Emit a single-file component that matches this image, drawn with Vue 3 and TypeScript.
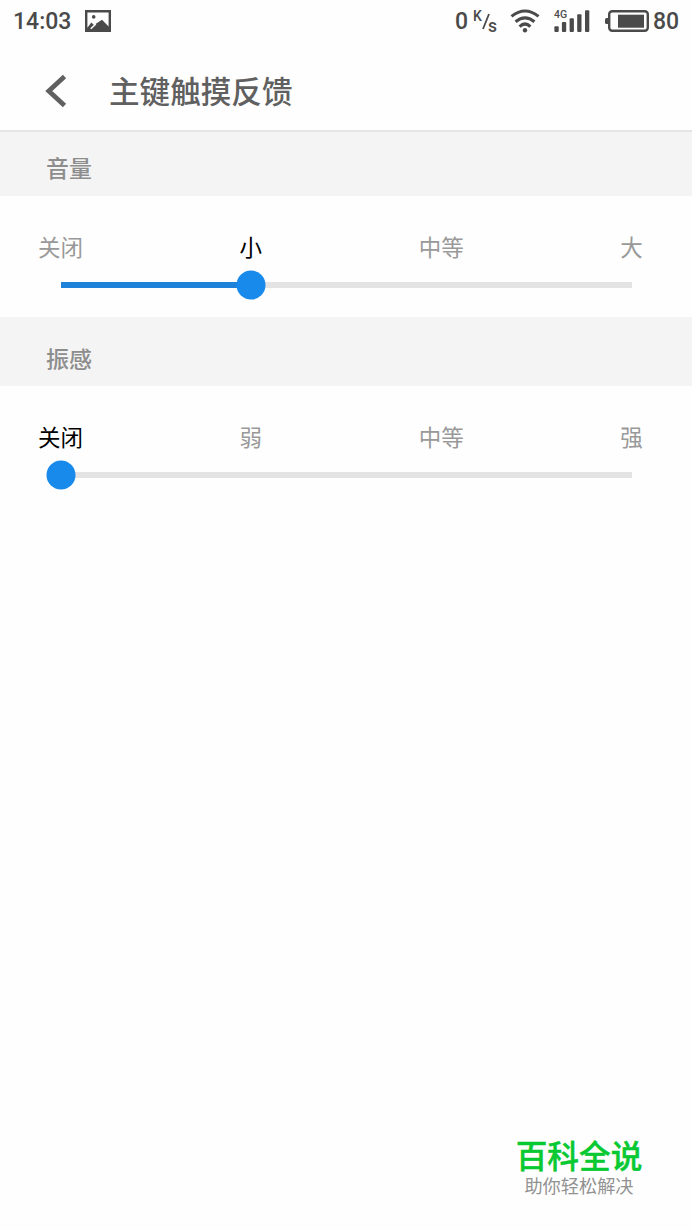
<script setup lang="ts">
import { ref } from 'vue'

interface Setting {
  title: string
  options: string[]
  value: number
}

const settings = ref<Setting[]>([
  { title: '音量', options: ['关闭', '小', '中等', '大'], value: 1 },
  { title: '振感', options: ['关闭', '弱', '中等', '强'], value: 0 },
])

const percent = (s: Setting): string => `${(s.value / (s.options.length - 1)) * 100}%`
</script>

<template>
  <main class="screen">
    <div class="status">
      <span class="time">14:03</span>
      <svg class="picture" width="26" height="22" viewBox="0 0 26 22">
        <path fill="#4a4a4a" fill-rule="evenodd" d="M0 0H26V22H0ZM2.4 2.4V17.8L6.3 12.6L9 15L17 9.8L23.6 16.5V2.4Z" />
        <circle cx="8.7" cy="6.9" r="1.8" fill="#4a4a4a" />
        <path d="M5.8 18.8L10.8 14" stroke="#fff" stroke-width="1.5" />
      </svg>
      <span class="speed">0</span>
      <span class="unit">
        <span class="unit-k">K</span>
        <svg width="8" height="18" viewBox="0 0 8 18">
          <path d="M1 17L7 2" stroke="#4a4a4a" stroke-width="1.8" />
        </svg>
        <span class="unit-s">s</span>
      </span>
      <svg class="wifi" width="30" height="24" viewBox="0 0 30 24" fill="none" stroke="#4a4a4a" stroke-width="3.1">
        <path d="M1.5 7.4Q15 -3.4 28.5 7.4" />
        <path d="M5.6 12.7Q15 4.9 24.4 12.7" />
        <path d="M9.6 17.6Q15 12.4 20.4 17.6" />
        <circle cx="15" cy="21.3" r="2.2" fill="#4a4a4a" stroke="none" />
      </svg>
      <svg class="signal" width="36" height="24" viewBox="0 0 36 24" fill="#4a4a4a">
        <text x="0" y="8.7" class="network">4G</text>
        <rect x="0.4" y="17.2" width="4.3" height="5.8" rx="1" />
        <rect x="7.9" y="13" width="4.3" height="10" rx="1" />
        <rect x="15.6" y="9.3" width="4.3" height="13.7" rx="1" />
        <rect x="23.2" y="5.2" width="4.3" height="17.8" rx="1" />
        <rect x="31" y="1.2" width="4.3" height="21.8" rx="1" />
      </svg>
      <svg class="battery" width="45" height="24" viewBox="0 0 45 24">
        <rect x="0" y="9" width="4" height="6" rx="1.5" fill="#4a4a4a" />
        <rect x="4.2" y="2.2" width="38.6" height="19.6" rx="3" fill="none" stroke="#4a4a4a" stroke-width="2.4" />
        <rect x="13" y="5.7" width="26" height="13" fill="#4a4a4a" />
      </svg>
      <span class="level">80</span>
    </div>

    <header class="header">
      <svg class="back" width="22" height="34" viewBox="0 0 22 34">
        <path d="M19.5 2.5L3.8 17L19.5 31.5" fill="none" stroke="#606060" stroke-width="4.8" />
      </svg>
      <h1>主键触摸反馈</h1>
    </header>

    <section v-for="s in settings" :key="s.title" class="setting">
      <h2>{{ s.title }}</h2>
      <div class="panel">
        <div class="labels">
          <span
            v-for="(option, i) in s.options"
            :key="option"
            class="label"
            :class="{ active: i === s.value }"
            @click="s.value = i"
          >{{ option }}</span>
        </div>
        <div class="track">
          <div class="fill" :style="{ width: percent(s) }"></div>
          <div class="thumb" :style="{ left: percent(s) }"></div>
        </div>
      </div>
    </section>

    <footer class="brand">
      <strong>百科全说</strong>
      <span>助你轻松解决</span>
    </footer>
  </main>
</template>

<style>
body {
  margin: 0;
  background: #fefefe;
}
</style>

<style scoped>
.screen {
  display: flex;
  flex-direction: column;
  box-sizing: border-box;
  width: 692px;
  height: 1230px;
  overflow: hidden;
  background: #fefefe;
  font-family: "Liberation Sans", "Noto Sans CJK SC", sans-serif;
}
.status {
  display: flex;
  align-items: center;
  flex: none;
  height: 42px;
  padding-left: 13px;
  color: #4a4a4a;
  font: 500 23px/42px Roboto, sans-serif;
}
.time,
.speed,
.level {
  padding-top: 2px;
}
.time {
  width: 72px;
}
.speed {
  margin-left: 344px;
  width: 18px;
}
.unit {
  display: flex;
  align-items: center;
  width: 24px;
}
.unit-k {
  width: 8.5px;
  margin-top: -10px;
  font-size: 14px;
  line-height: 20px;
}
.unit-s {
  margin-top: 10px;
  margin-left: -1.5px;
  font-size: 17.5px;
  line-height: 24px;
}
.wifi {
  margin-left: 13px;
}
.signal {
  margin-left: 14px;
}
.network {
  font: 500 10.5px Roboto, sans-serif;
}
.battery {
  margin-left: 15px;
}
.level {
  margin-left: 3px;
}
.header {
  display: flex;
  align-items: center;
  box-sizing: border-box;
  flex: none;
  height: 90px;
  padding: 0 0 0 45px;
  border-bottom: 2px solid #e5e5e5;
}
.back {
  margin-top: 10px;
}
h1 {
  margin: 12px 0 0 42px;
  color: #606060;
  font-size: 30.6px;
  font-weight: 500;
  line-height: 44px;
}
.setting {
  flex: none;
}
h2 {
  box-sizing: border-box;
  height: 69px;
  margin: 0;
  padding: 26px 0 0 46px;
  background: #f4f4f4;
  color: #8d8d8d;
  font-size: 23px;
  font-weight: 500;
  line-height: 34px;
}
.header + .setting h2 {
  height: 64px;
  padding-top: 20px;
}
.panel {
  box-sizing: border-box;
  height: 121px;
  padding: 36px 60.5px 0;
}
.labels {
  display: flex;
  justify-content: space-between;
  height: 34px;
}
.label {
  display: flex;
  justify-content: center;
  width: 0;
  color: #999;
  font-size: 22.5px;
  line-height: 34px;
  white-space: nowrap;
  cursor: pointer;
}
.label.active {
  color: #000;
}
.track {
  position: relative;
  height: 6px;
  margin-top: 16.4px;
  background: #e3e3e3;
}
.fill {
  height: 100%;
  background: #1d82d8;
}
.thumb {
  position: absolute;
  top: 50%;
  width: 29px;
  height: 29px;
  border-radius: 50%;
  background: #188aeb;
  transform: translate(-50%, -50%);
}
.brand {
  display: flex;
  flex-direction: column;
  align-items: center;
  width: 128px;
  margin: auto 49px 31px auto;
}
.brand strong {
  color: #08c932;
  font-size: 31.7px;
  font-weight: 500;
  line-height: 36px;
  white-space: nowrap;
  -webkit-text-stroke: 0.4px #08c932;
}
.brand span {
  color: #929292;
  font-size: 18.2px;
  line-height: 24px;
  white-space: nowrap;
}
</style>
